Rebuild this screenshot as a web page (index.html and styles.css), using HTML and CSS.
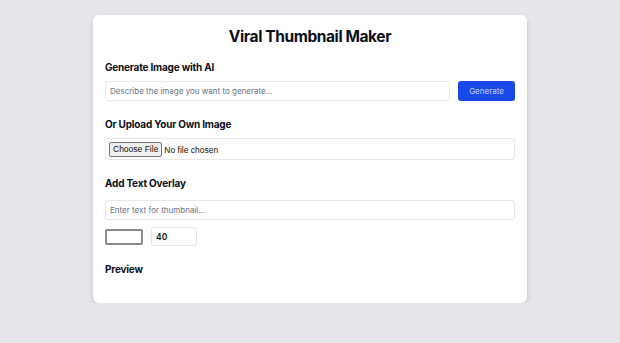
FILE: index.html
```html
<!DOCTYPE html>
<html lang="en">
<head>
  <meta charset="UTF-8">
  <meta name="viewport" content="width=device-width, initial-scale=1.0">
  <title>Viral Thumbnail Maker</title>
  <link rel="stylesheet" href="styles.css">
</head>
<body>
  <div class="maker">
    <h1>Viral Thumbnail Maker</h1>

    <!-- AI generation -->
    <div class="section">
      <h2>Generate Image with AI</h2>
      <div class="generate-row">
        <input type="text" class="field" placeholder="Describe the image you want to generate...">
        <button class="generate-btn">Generate</button>
      </div>
    </div>

    <!-- Upload -->
    <div class="section">
      <h2>Or Upload Your Own Image</h2>
      <div class="upload-box">
        <input type="file" class="file-input" accept="image/*">
      </div>
    </div>

    <!-- Text overlay -->
    <div class="section">
      <h2>Add Text Overlay</h2>
      <input type="text" class="field" placeholder="Enter text for thumbnail...">
      <div class="overlay-options">
        <input type="color" class="color-input" value="#ffffff">
        <input type="number" class="size-input" value="40">
      </div>
    </div>

    <div class="section preview">
      <h2>Preview</h2>
    </div>
  </div>
</body>
</html>
```

FILE: styles.css
```css
body {
  margin: 0;
  padding-top: 15px;
  background-color: #e5e7eb;
  font-family: Inter, "Liberation Sans", Arial, sans-serif;
  color: #111827;
}

.maker {
  width: 410px;
  margin: 0 auto;
  padding: 12px;
  background-color: #fff;
  border-radius: 6px;
  box-shadow: 0 3px 6px rgba(0, 0, 0, 0.15);
}

.maker h1 {
  margin: 0;
  font-size: 15.5px;
  line-height: 20px;
  text-align: center;
  font-weight: 700;
  letter-spacing: -0.4px;
  color: #0b0f19;
}

.section {
  margin-top: 16px;
}

.section:first-of-type {
  margin-top: 13px;
}

.section h2 {
  margin: 0 0 7px;
  font-size: 10px;
  line-height: 14px;
  font-weight: 700;
  letter-spacing: -0.2px;
  color: #0b0f19;
}

.field {
  box-sizing: border-box;
  width: 100%;
  height: 20px;
  padding: 0 4px;
  border: 1px solid #e5e7eb;
  border-radius: 3px;
  font-family: Inter, "Liberation Sans", sans-serif;
  font-size: 8px;
  color: #111827;
  outline: none;
}

.field::placeholder {
  color: #6b7280;
}

.generate-row {
  display: flex;
  gap: 8px;
}

.generate-row .field {
  flex: 1;
}

.generate-btn {
  width: 57px;
  height: 20px;
  padding: 0;
  border: none;
  border-radius: 3px;
  background-color: #1849e6;
  color: #c7d2fe;
  font-family: Inter, "Liberation Sans", sans-serif;
  font-size: 8px;
  cursor: pointer;
}

.upload-box {
  box-sizing: border-box;
  height: 22px;
  padding: 3px 3px;
  border: 1px solid #e5e7eb;
  border-radius: 3px;
  display: flex;
  align-items: center;
}

.file-input {
  font-family: "Liberation Sans", Arial, sans-serif;
  font-size: 8.5px;
  color: #111;
}

.file-input::file-selector-button {
  font-family: "Liberation Sans", Arial, sans-serif;
  font-size: 8.5px;
  height: 15px;
  padding: 0 3px;
  margin-right: 2px;
  border: 1px solid #767676;
  border-radius: 2px;
  background-color: #efefef;
  color: #111;
}

.overlay-options {
  display: flex;
  align-items: center;
  gap: 8px;
  margin-top: 7px;
}

.color-input {
  box-sizing: border-box;
  width: 38px;
  height: 16px;
  padding: 0;
  border: 2px solid #8a8a8a;
  border-radius: 2px;
  background-color: #fff;
}

.color-input::-webkit-color-swatch-wrapper {
  padding: 0;
}

.color-input::-webkit-color-swatch {
  border: none;
}

.size-input {
  box-sizing: border-box;
  width: 46px;
  height: 19px;
  padding: 0 4px;
  border: 1px solid #e5e7eb;
  border-radius: 3px;
  font-family: Inter, "Liberation Sans", sans-serif;
  font-size: 8.5px;
  font-weight: 600;
  color: #111;
}

.preview {
  padding-bottom: 8px;
}
```
